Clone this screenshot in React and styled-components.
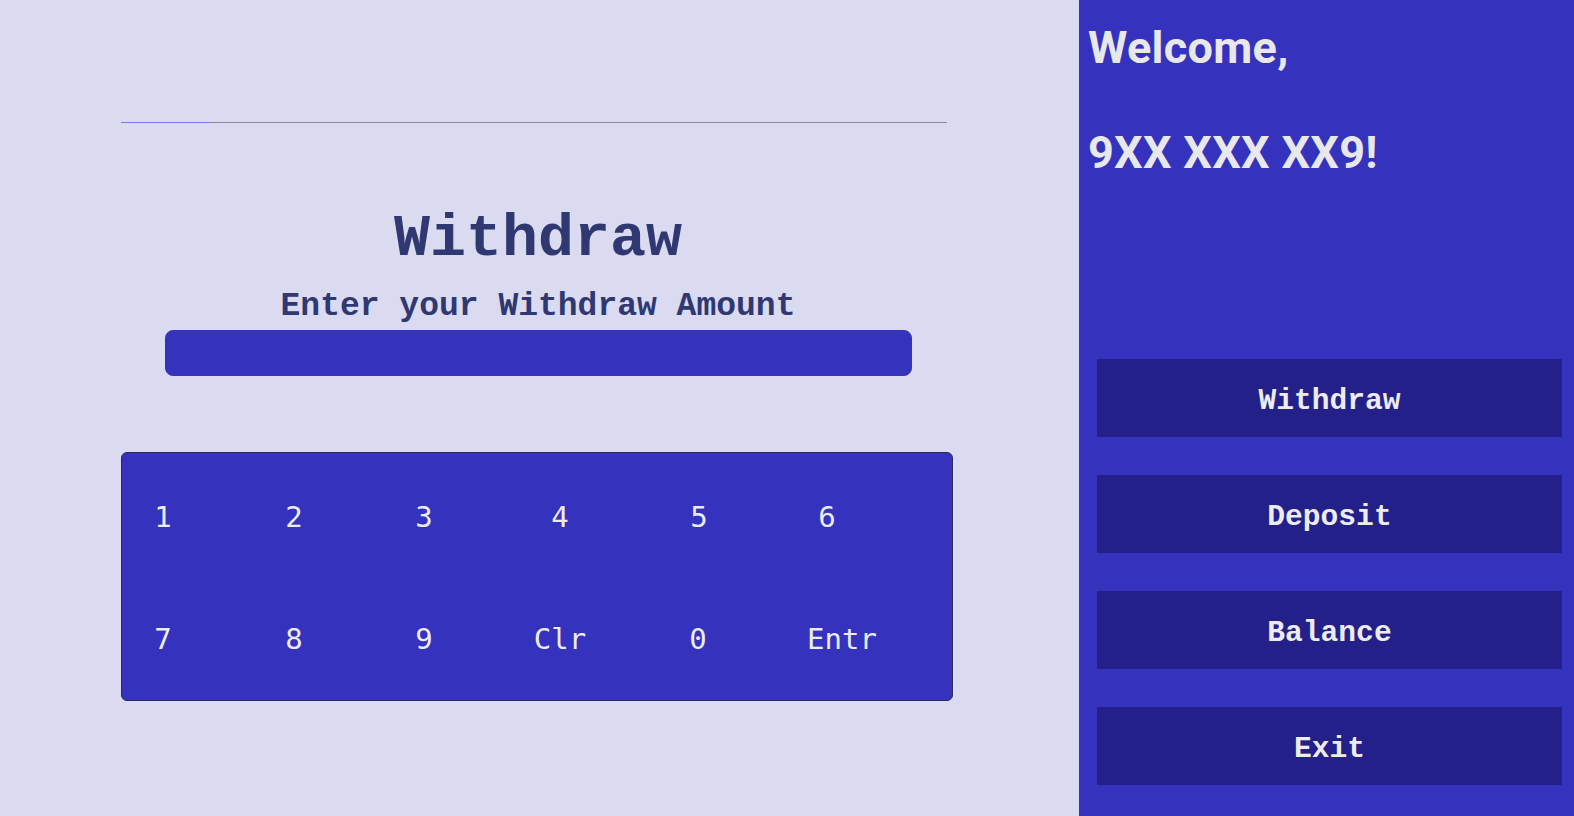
import React from 'react'
import styled, { createGlobalStyle } from 'styled-components'

const Global = createGlobalStyle`
	html, body {
		margin: 0;
		padding: 0;
		background: #dadaf1;
	}
	* { box-sizing: border-box; }
`

const Page = styled.div`
	display: flex;
	width: 1574px;
	height: 816px;
	overflow: hidden;
`

const Main = styled.div`
	width: 1079px;
	flex: 0 0 auto;
	display: flex;
	flex-direction: column;
	padding: 122px 0 0 121px;
`

const Rule = styled.div`
	width: 826px;
	height: 1px;
	background: linear-gradient(to right, #7a7ad8 0 90px, #8a8a98 90px);
`

const Title = styled.h1`
	margin: 86px 0 0;
	width: 834px;
	text-align: center;
	font-family: 'Liberation Mono', 'Courier New', monospace;
	font-weight: 700;
	font-size: 60px;
	line-height: 60px;
	color: #2f3870;
`

const Subtitle = styled.h2`
	margin: 21px 0 0;
	width: 834px;
	text-align: center;
	font-family: 'Liberation Mono', 'Courier New', monospace;
	font-weight: 700;
	font-size: 33px;
	line-height: 33px;
	color: #2f3870;
`

const AmountInput = styled.input`
	margin: 7px 0 0 44px;
	width: 747px;
	height: 46px;
	border: 1px solid #3532bd;
	border-radius: 8px;
	background: #3532bd;
	color: #e8e8e8;
	font-family: 'Liberation Mono', monospace;
	font-size: 24px;
	outline: none;
`

const Keypad = styled.div`
	margin-top: 76px;
	width: 832px;
	height: 249px;
	padding-top: 3px;
	background: #3532bd;
	border: 1px solid #2a2a55;
	border-radius: 6px;
	display: grid;
	grid-template-columns: 82px 180px 80px 186px 94px 176px;
	grid-template-rows: 122px 122px;
	align-items: center;
	justify-items: center;
`

const Key = styled.button`
	background: none;
	border: none;
	padding: 0;
	color: #ececf4;
	font-family: 'DejaVu Sans Mono', monospace;
	font-size: 29px;
	cursor: pointer;
	transform: translateX(${p => p.$shift || 0}px);
`

const Side = styled.aside`
	flex: 1 1 auto;
	background: #3532bd;
	padding: 25px 12px 0 18px;
	display: flex;
	flex-direction: column;
`

const Greeting = styled.h1`
	margin: 0 0 0 -9px;
	font-family: Roboto, sans-serif;
	font-weight: 700;
	font-size: 45px;
	line-height: 45px;
	letter-spacing: 0.3px;
	color: #e8e8ec;
	& + & {
		margin-top: 60px;
	}
`

const Menu = styled.div`
	margin-top: 184px;
	display: flex;
	flex-direction: column;
	gap: 38px;
`

const MenuButton = styled.button`
	height: 78px;
	border: none;
	padding: 6px 0 0;
	background: #24208a;
	color: #ececf0;
	font-family: 'Liberation Mono', 'Courier New', monospace;
	font-weight: 700;
	font-size: 29.6px;
	cursor: pointer;
`

const keys = [
	['1', 0], ['2', 0], ['3', 0], ['4', 3], ['5', 2], ['6', -5],
	['7', 0], ['8', 0], ['9', 0], ['Clr', 3], ['0', 1], ['Entr', 10],
]

export default function App() {
	return (
		<Page>
			<Global />
			<Main>
				<Rule />
				<Title>Withdraw</Title>
				<Subtitle>Enter your Withdraw Amount</Subtitle>
				<AmountInput type="text" />
				<Keypad>
					{keys.map(([k, s]) => (
						<Key key={k} $shift={s}>{k}</Key>
					))}
				</Keypad>
			</Main>
			<Side>
				<Greeting>Welcome,</Greeting>
				<Greeting>9XX XXX XX9!</Greeting>
				<Menu>
					<MenuButton>Withdraw</MenuButton>
					<MenuButton>Deposit</MenuButton>
					<MenuButton>Balance</MenuButton>
					<MenuButton>Exit</MenuButton>
				</Menu>
			</Side>
		</Page>
	)
}
